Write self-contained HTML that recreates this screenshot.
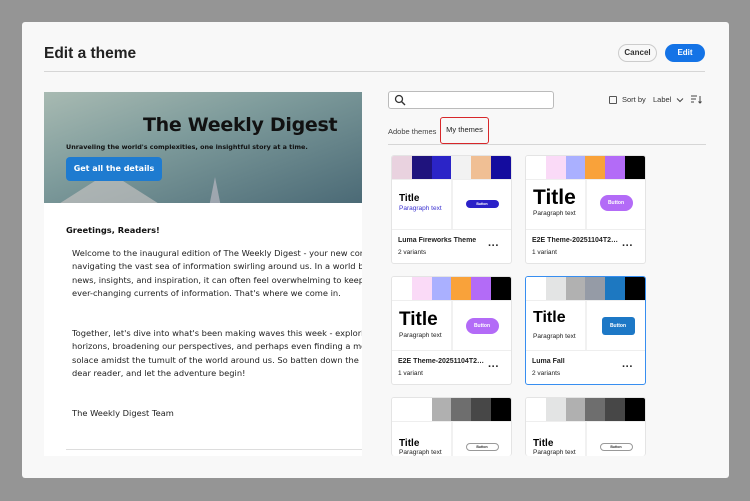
<!DOCTYPE html>
<html><head><style>
*{box-sizing:border-box;margin:0;padding:0}
body{width:750px;height:501px;background:#959595;font-family:"Liberation Sans",sans-serif;position:relative;overflow:hidden}
.dlg{position:absolute;left:22px;top:22px;width:707px;height:456px;background:#f8f8f8;border-radius:3px}
.abs{position:absolute}
h1{position:absolute;left:22px;top:23px;font-size:15.5px;font-weight:bold;color:#222}
.btn{position:absolute;top:22px;height:18px;border-radius:9px;font-size:8px;font-weight:bold;text-align:center;line-height:16px}
.card{position:absolute;width:121px;background:#fff;border:1px solid #e4e4e4;border-radius:3px;overflow:hidden}
.sw{display:flex;height:23px}.sw div{flex:1}
.pv{display:flex;height:51px;border-top:1px solid #eee;border-bottom:1px solid #eee}
.pv>div{flex:1;position:relative}
.pv>div:first-child{border-right:2px solid #f1f1f1}
.ft{height:33px;position:relative;padding:7px 0 0 6px;font-size:6.5px;color:#222}
.ft b{display:block;font-size:7px;margin-bottom:5px;font-weight:bold;white-space:nowrap;max-width:88px;overflow:hidden;text-overflow:ellipsis}
.dots{position:absolute;right:12px;top:10px;font-size:11px;font-weight:bold}
.t{position:absolute;left:7px;font-weight:bold;color:#000}
.p{position:absolute;left:7px;font-size:6.5px;color:#222;white-space:nowrap}
.b{position:absolute;color:#fff;font-size:5px;font-weight:bold;text-align:center}
.body p{position:absolute;left:28px;font-family:"DejaVu Sans",sans-serif;font-size:8.3px;line-height:13.3px;color:#222;white-space:nowrap}
</style></head><body>
<div class="dlg">
<h1>Edit a theme</h1>
<div class="btn" style="left:596px;width:39px;border:1.5px solid #ccc;background:#f8f8f8;color:#333">Cancel</div>
<div class="btn" style="left:643px;width:40px;background:#1473e6;color:#fff;line-height:18px">Edit</div>
<div class="abs" style="left:22px;top:49px;width:661px;height:1px;background:#d6d6d6"></div>

<div class="abs" style="left:22px;top:70px;width:318px;height:364px;background:#fff;overflow:hidden">
 <div class="abs" style="left:0;top:0;width:318px;height:111px;overflow:hidden;background:linear-gradient(160deg,#a8bab2 0%,#7f9c9c 40%,#4b6a76 100%)">
  <div class="abs" style="left:10px;top:80px;width:0;height:0;border-left:55px solid transparent;border-right:55px solid transparent;border-bottom:35px solid #cfc8c6;opacity:.6"></div>
  <div class="abs" style="left:165px;top:85px;width:0;height:0;border-left:6px solid transparent;border-right:6px solid transparent;border-bottom:30px solid #b8b6c0;opacity:.7"></div>
  <div class="abs" style="left:99px;top:22px;font-family:'DejaVu Sans',sans-serif;font-size:19px;font-weight:bold;color:#111;letter-spacing:-.3px">The Weekly Digest</div>
  <div class="abs" style="left:22px;top:51px;font-family:'DejaVu Sans',sans-serif;font-size:6.4px;font-weight:bold;color:#111">Unraveling the world's complexities, one insightful story at a time.</div>
  <div class="abs" style="left:22px;top:65px;width:96px;height:24px;background:#1e7bd0;border-radius:4px;color:#fff;font-family:'DejaVu Sans',sans-serif;font-size:8px;font-weight:bold;text-align:center;line-height:24px">Get all the details</div>
 </div>
 <div class="body">
  <div class="abs" style="left:22px;top:133px;font-family:'DejaVu Sans',sans-serif;font-size:8.3px;font-weight:bold;color:#111">Greetings, Readers!</div>
  <p style="top:155px">Welcome to the inaugural edition of The Weekly Digest - your new companion in<br>navigating the vast sea of information swirling around us. In a world brimming with<br>news, insights, and inspiration, it can often feel overwhelming to keep up with the<br>ever-changing currents of information. That's where we come in.</p>
  <p style="top:235px">Together, let's dive into what's been making waves this week - exploring new<br>horizons, broadening our perspectives, and perhaps even finding a moment of<br>solace amidst the tumult of the world around us. So batten down the hatches,<br>dear reader, and let the adventure begin!</p>
  <p style="top:315px">The Weekly Digest Team</p>
 </div>
 <div class="abs" style="left:22px;top:357px;width:296px;height:1px;background:#ddd"></div>
</div>

<div class="abs" style="left:366px;top:69px;width:166px;height:18px;border:1px solid #bbb;border-radius:3px;background:#fff">
 <svg width="12" height="12" class="abs" style="left:5px;top:2px"><circle cx="5" cy="5" r="3.5" fill="none" stroke="#333" stroke-width="1.3"/><path d="M7.5 7.5L11 11" stroke="#333" stroke-width="1.4"/></svg>
</div>
<div class="abs" style="left:587px;top:74px;width:8px;height:8px;border:1.2px solid #555;border-radius:1px"></div>
<div class="abs" style="left:600px;top:73px;font-size:7.5px;color:#333">Sort by</div>
<div class="abs" style="left:631px;top:73px;font-size:7.5px;color:#333">Label</div>
<svg class="abs" style="left:654px;top:75px" width="8" height="6"><path d="M1 1.5L4 4.5L7 1.5" fill="none" stroke="#444" stroke-width="1"/></svg>
<svg class="abs" style="left:669px;top:73px" width="11" height="9"><path d="M0 1h6M0 4h5M0 7h3M9 1v7M7.5 6.5L9 8L10.5 6.5" fill="none" stroke="#444" stroke-width="1"/></svg>

<div class="abs" style="left:366px;top:105px;font-size:7.5px;color:#444">Adobe themes</div>
<div class="abs" style="left:418px;top:95px;width:49px;height:27px;border:1.5px solid #d7272a;border-radius:3px;font-size:7.5px;color:#222;text-align:center;line-height:24px">My themes</div>
<div class="abs" style="left:366px;top:122px;width:318px;height:1px;background:#d6d6d6"></div>

<div class="card" style="left:369px;top:133px">
 <div class="sw"><div style="background:#e9d2df"></div><div style="background:#1f137d"></div><div style="background:#2b24c7"></div><div style="background:#f2f2f2"></div><div style="background:#f0bf94"></div><div style="background:#140c9e"></div></div>
 <div class="pv"><div><div class="t" style="top:13px;font-size:10px">Title</div><div class="p" style="top:25px;color:#3a30d0">Paragraph text</div></div><div><div class="b" style="left:13px;top:20px;width:33px;height:8px;border-radius:4px;background:#2b21c8;line-height:8px;font-size:3.5px">Button</div></div></div>
 <div class="ft"><b>Luma Fireworks Theme</b>2 variants<span class="dots">···</span></div>
</div>
<div class="card" style="left:503px;top:133px">
 <div class="sw"><div style="background:#fff"></div><div style="background:#fadaf7"></div><div style="background:#aab0ff"></div><div style="background:#f9a23a"></div><div style="background:#b36bf7"></div><div style="background:#000"></div></div>
 <div class="pv"><div><div class="t" style="top:6px;font-size:21px">Title</div><div class="p" style="top:30px">Paragraph text</div></div><div><div class="b" style="left:13px;top:15px;width:33px;height:16px;border-radius:8px;background:#b36bf7;line-height:16px">Button</div></div></div>
 <div class="ft"><b>E2E Theme-20251104T22330</b>1 variant<span class="dots">···</span></div>
</div>
<div class="card" style="left:369px;top:254px">
 <div class="sw"><div style="background:#fff"></div><div style="background:#fadaf7"></div><div style="background:#aab0ff"></div><div style="background:#f9a23a"></div><div style="background:#b36bf7"></div><div style="background:#000"></div></div>
 <div class="pv"><div><div class="t" style="top:8px;font-size:19px">Title</div><div class="p" style="top:31px">Paragraph text</div></div><div><div class="b" style="left:13px;top:17px;width:33px;height:16px;border-radius:8px;background:#b36bf7;line-height:16px">Button</div></div></div>
 <div class="ft"><b>E2E Theme-20251104T22330</b>1 variant<span class="dots">···</span></div>
</div>
<div class="card" style="left:503px;top:254px;border:1.5px solid #378ef0">
 <div class="sw"><div style="background:#fff"></div><div style="background:#e3e4e4"></div><div style="background:#b1b1b1"></div><div style="background:#959ba6"></div><div style="background:#1d78c1"></div><div style="background:#000"></div></div>
 <div class="pv"><div><div class="t" style="top:8px;font-size:16px">Title</div><div class="p" style="top:32px">Paragraph text</div></div><div><div class="b" style="left:15px;top:16px;width:33px;height:18px;border-radius:3px;background:#1d78c6;line-height:18px">Button</div></div></div>
 <div class="ft"><b>Luma Fall</b>2 variants<span class="dots">···</span></div>
</div>
<div class="card" style="left:369px;top:375px;height:59px;border-bottom:none">
 <div class="sw"><div style="background:#fff"></div><div style="background:#fff"></div><div style="background:#b0b0b0"></div><div style="background:#6e6e6e"></div><div style="background:#474747"></div><div style="background:#000"></div></div>
 <div class="pv" style="border-bottom:none"><div><div class="t" style="top:16px;font-size:10px">Title</div><div class="p" style="top:27px">Paragraph text</div></div><div><div class="b" style="left:13px;top:21px;width:33px;height:8px;border-radius:4px;border:1px solid #999;color:#333;font-size:3.5px;line-height:6px">Button</div></div></div>
</div>
<div class="card" style="left:503px;top:375px;height:59px;border-bottom:none">
 <div class="sw"><div style="background:#fff"></div><div style="background:#e3e4e4"></div><div style="background:#b0b0b0"></div><div style="background:#6e6e6e"></div><div style="background:#474747"></div><div style="background:#000"></div></div>
 <div class="pv" style="border-bottom:none"><div><div class="t" style="top:16px;font-size:10px">Title</div><div class="p" style="top:27px">Paragraph text</div></div><div><div class="b" style="left:13px;top:21px;width:33px;height:8px;border-radius:4px;border:1px solid #999;color:#333;font-size:3.5px;line-height:6px">Button</div></div></div>
</div>
</div>
</body></html>
